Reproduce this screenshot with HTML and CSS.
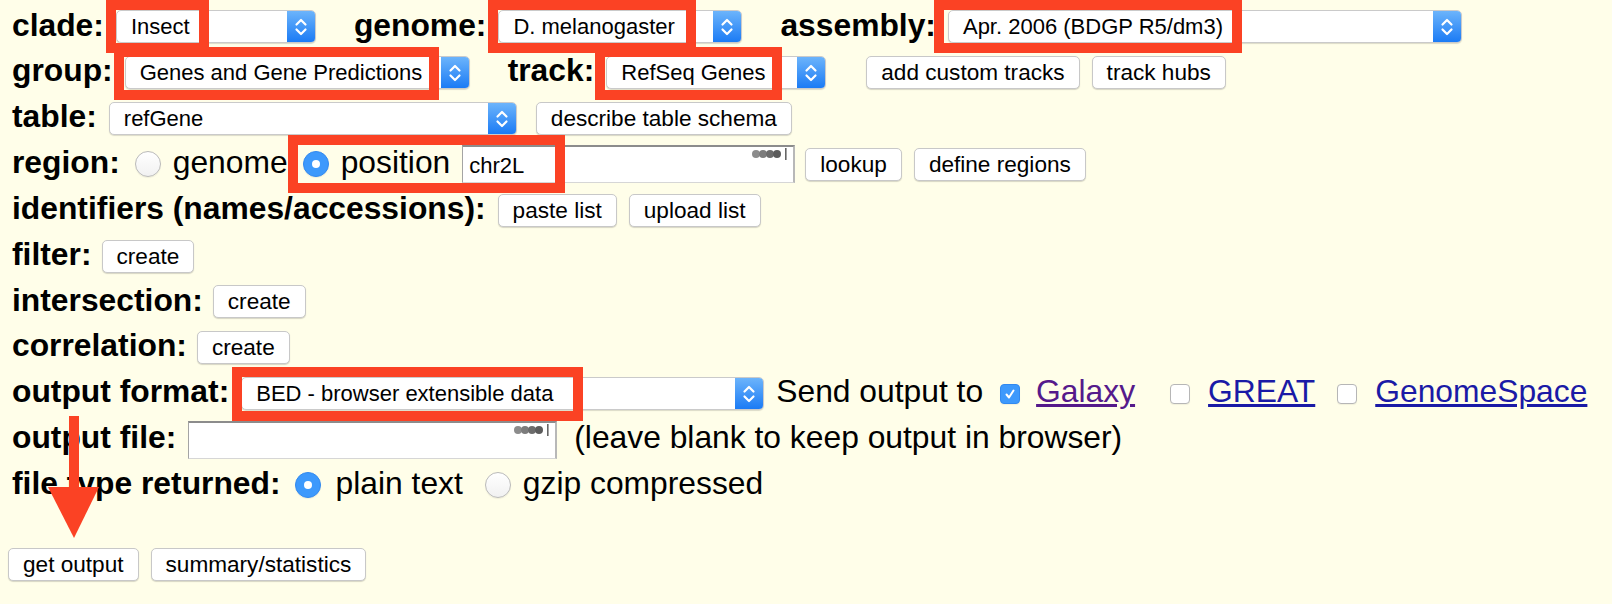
FILE: index.html
```html
<!DOCTYPE html>
<html lang="en">
<head>
<meta charset="utf-8">
<title>Table Browser</title>
<link rel="stylesheet" href="styles.css">
</head>
<body>
<div class="page">
  <form class="form">
    <div class="row">
      <span class="lbl">clade:</span>
      <div class="sel sel-clade"><span class="sel-text">Insect</span><span class="sel-arrow"><svg width="14" height="22" viewBox="0 0 14 22"><path d="M2.5 8.5 L7 4 L11.5 8.5 M2.5 13.5 L7 18 L11.5 13.5" fill="none" stroke="#fff" stroke-width="2.2" stroke-linecap="round" stroke-linejoin="round"/></svg></span></div>
      <span class="lbl wide">genome:</span>
      <div class="sel sel-genome"><span class="sel-text">D. melanogaster</span><span class="sel-arrow"><svg width="14" height="22" viewBox="0 0 14 22"><path d="M2.5 8.5 L7 4 L11.5 8.5 M2.5 13.5 L7 18 L11.5 13.5" fill="none" stroke="#fff" stroke-width="2.2" stroke-linecap="round" stroke-linejoin="round"/></svg></span></div>
      <span class="lbl wide">assembly:</span>
      <div class="sel sel-assembly"><span class="sel-text">Apr. 2006 (BDGP R5/dm3)</span><span class="sel-arrow"><svg width="14" height="22" viewBox="0 0 14 22"><path d="M2.5 8.5 L7 4 L11.5 8.5 M2.5 13.5 L7 18 L11.5 13.5" fill="none" stroke="#fff" stroke-width="2.2" stroke-linecap="round" stroke-linejoin="round"/></svg></span></div>
    </div>

    <div class="row">
      <span class="lbl">group:</span>
      <div class="sel sel-group"><span class="sel-text">Genes and Gene Predictions</span><span class="sel-arrow"><svg width="14" height="22" viewBox="0 0 14 22"><path d="M2.5 8.5 L7 4 L11.5 8.5 M2.5 13.5 L7 18 L11.5 13.5" fill="none" stroke="#fff" stroke-width="2.2" stroke-linecap="round" stroke-linejoin="round"/></svg></span></div>
      <span class="lbl wide">track:</span>
      <div class="sel sel-track"><span class="sel-text">RefSeq Genes</span><span class="sel-arrow"><svg width="14" height="22" viewBox="0 0 14 22"><path d="M2.5 8.5 L7 4 L11.5 8.5 M2.5 13.5 L7 18 L11.5 13.5" fill="none" stroke="#fff" stroke-width="2.2" stroke-linecap="round" stroke-linejoin="round"/></svg></span></div>
      <button type="button" class="btn wider">add custom tracks</button>
      <button type="button" class="btn">track hubs</button>
    </div>

    <div class="row">
      <span class="lbl">table:</span>
      <div class="sel sel-table"><span class="sel-text">refGene</span><span class="sel-arrow"><svg width="14" height="22" viewBox="0 0 14 22"><path d="M2.5 8.5 L7 4 L11.5 8.5 M2.5 13.5 L7 18 L11.5 13.5" fill="none" stroke="#fff" stroke-width="2.2" stroke-linecap="round" stroke-linejoin="round"/></svg></span></div>
      <button type="button" class="btn mid">describe table schema</button>
    </div>

    <div class="row">
      <span class="lbl">region:</span>
      <span class="radio nudge"></span>
      <span class="txt">genome</span>
      <span class="radio on nudge"></span>
      <span class="txt">position</span>
      <div class="field field-pos"><input type="text" value="chr2L"><svg class="dots" width="40" height="12" viewBox="0 0 40 12"><circle cx="5" cy="6" r="4" fill="#8c8c8c"/><circle cx="12" cy="6" r="4" fill="#7c7c7c"/><circle cx="19" cy="6" r="4" fill="#6c6c6c"/><circle cx="26" cy="6" r="4" fill="#5c5c5c"/><rect x="34" y="0" width="1.6" height="12" fill="#666"/></svg></div>
      <button type="button" class="btn tuck">lookup</button>
      <button type="button" class="btn">define regions</button>
    </div>

    <div class="row">
      <span class="lbl">identifiers (names/accessions):</span>
      <button type="button" class="btn">paste list</button>
      <button type="button" class="btn">upload list</button>
    </div>

    <div class="row row-create">
      <span class="lbl">filter:</span>
      <button type="button" class="btn">create</button>
    </div>

    <div class="row row-create">
      <span class="lbl">intersection:</span>
      <button type="button" class="btn">create</button>
    </div>

    <div class="row row-create">
      <span class="lbl">correlation:</span>
      <button type="button" class="btn">create</button>
    </div>

    <div class="row">
      <span class="lbl">output format:</span>
      <div class="sel sel-format"><span class="sel-text">BED - browser extensible data</span><span class="sel-arrow"><svg width="14" height="22" viewBox="0 0 14 22"><path d="M2.5 8.5 L7 4 L11.5 8.5 M2.5 13.5 L7 18 L11.5 13.5" fill="none" stroke="#fff" stroke-width="2.2" stroke-linecap="round" stroke-linejoin="round"/></svg></span></div>
      <span class="txt">Send output to</span>
      <span class="check on"><svg width="18" height="18" viewBox="0 0 18 18"><path d="M5.5 9.5 L8 12.5 L12.5 5.5" fill="none" stroke="#fff" stroke-width="2" stroke-linecap="round" stroke-linejoin="round"/></svg></span>
      <a class="lnk visited" href="#galaxy">Galaxy</a>
      <span class="check far"></span>
      <a class="lnk" href="#great">GREAT</a>
      <span class="check far2"></span>
      <a class="lnk" href="#genomespace">GenomeSpace</a>
    </div>

    <div class="row">
      <span class="lbl">output file:</span>
      <div class="field field-out"><input type="text" value=""><svg class="dots" width="40" height="12" viewBox="0 0 40 12"><circle cx="5" cy="6" r="4" fill="#8c8c8c"/><circle cx="12" cy="6" r="4" fill="#7c7c7c"/><circle cx="19" cy="6" r="4" fill="#6c6c6c"/><circle cx="26" cy="6" r="4" fill="#5c5c5c"/><rect x="34" y="0" width="1.6" height="12" fill="#666"/></svg></div>
      <span class="txt note">(leave blank to keep output in browser)</span>
    </div>

    <div class="row">
      <span class="lbl">file type returned:</span>
      <span class="radio on shift"></span>
      <span class="txt shift-txt">plain text</span>
      <span class="radio far"></span>
      <span class="txt">gzip compressed</span>
    </div>

    <div class="actions">
      <button type="button" class="btn">get output</button>
      <button type="button" class="btn">summary/statistics</button>
    </div>
  </form>

  <div class="mark mark-clade"></div>
  <div class="mark mark-genome"></div>
  <div class="mark mark-assembly"></div>
  <div class="mark mark-group"></div>
  <div class="mark mark-track"></div>
  <div class="mark mark-position"></div>
  <div class="mark mark-format"></div>
  <svg class="arrow" width="52" height="124" viewBox="0 0 52 124"><rect x="21" y="0" width="10" height="76" fill="#fb4224"/><polygon points="0,71 51,71 26,122" fill="#fb4224"/></svg>
</div>
</body>
</html>
```

FILE: styles.css
```css
* { box-sizing: border-box; }

html, body {
  margin: 0;
  padding: 0;
}

body {
  background: #fffee9;
  color: #000;
  font-family: "Liberation Sans", Arial, Helvetica, sans-serif;
}

.page {
  position: relative;
  width: 1612px;
  height: 604px;
  overflow: hidden;
}

.form {
  margin: 0;
  padding: 4px 0 0 12px;
}

.row {
  display: flex;
  align-items: center;
  gap: 12px;
  height: 45.85px;
  white-space: nowrap;
}

.row-create { gap: 10px; }

.lbl {
  font-weight: bold;
  font-size: 31.8px;
  line-height: 1;
  margin-bottom: 3px;
}

.txt {
  font-size: 31.8px;
  line-height: 1;
  margin-bottom: 3px;
}

/* select popups */
.sel {
  display: flex;
  height: 33px;
  background: #fff;
  border: 1px solid #cacaca;
  border-radius: 5px;
  box-shadow: 0 1px 1px rgba(0, 0, 0, 0.14);
  overflow: hidden;
}

.sel-text {
  flex: 1;
  font-size: 22px;
  line-height: 31px;
  padding-left: 14px;
  overflow: hidden;
}

.sel-arrow {
  width: 28px;
  display: flex;
  align-items: center;
  justify-content: center;
  background: linear-gradient(#6cb4fb, #1b7bf5);
}

.sel-clade { width: 200px; }
.sel-genome { width: 244px; }
.sel-assembly { width: 514px; }
.sel-group { width: 345px; }
.sel-track { width: 220px; }
.sel-table { width: 408px; }
.sel-format { width: 523px; }

/* buttons */
.btn {
  height: 33px;
  margin: 0;
  padding: 0 14px;
  font-family: "Liberation Sans", Arial, Helvetica, sans-serif;
  font-size: 22.6px;
  line-height: 31px;
  color: #000;
  background: #fff;
  border: 1px solid #c8c8c8;
  border-radius: 5px;
  box-shadow: 0 1px 1px rgba(0, 0, 0, 0.16);
}

/* text fields */
.field {
  position: relative;
  height: 38px;
}

.field-pos { width: 333px; }
.field-out { width: 369px; }

.field input {
  width: 100%;
  height: 100%;
  margin: 0;
  padding: 3px 6px 0;
  font-family: "Liberation Sans", Arial, Helvetica, sans-serif;
  font-size: 22px;
  color: #000;
  background: #fff;
  border-style: solid;
  border-width: 2px 2px 1px 1px;
  border-color: #8c8c8c #b8b8b8 #d6d6d6 #a4a4a4;
  outline: none;
}

.dots {
  position: absolute;
  top: 3px;
  right: 4px;
}

/* radio buttons */
.radio {
  width: 26px;
  height: 26px;
  flex: none;
  border-radius: 50%;
  border: 1px solid #bababa;
  background: linear-gradient(#ffffff, #f1f1f1);
  box-shadow: 0 1px 1px rgba(0, 0, 0, 0.06);
}

.radio.on {
  display: flex;
  align-items: center;
  justify-content: center;
  background: #3d99fc;
  border-color: #3189f0;
}

.radio.on::after {
  content: "";
  width: 8px;
  height: 8px;
  border-radius: 50%;
  background: #fff;
}

.radio.far { margin-left: 10px; }

/* checkboxes */
.check {
  width: 20px;
  height: 20px;
  flex: none;
  display: flex;
  align-items: center;
  justify-content: center;
  border-radius: 4px;
  border: 1px solid #b6b6b6;
  background: #fff;
  box-shadow: 0 1px 1px rgba(0, 0, 0, 0.06);
  margin-left: 5px;
  margin-right: 4px;
}

.check.on {
  background: #3d99fc;
  border-color: #3189f0;
}

.check.far { margin-left: 23px; margin-right: 6px; }
.check.far2 { margin-left: 10px; margin-right: 6px; }

.lnk {
  font-size: 31.8px;
  line-height: 1;
  margin-bottom: 3px;
  color: #1a1aa6;
  text-decoration: underline;
}

.lnk.visited { color: #551a8b; }

/* bottom actions */
.actions {
  display: flex;
  gap: 12px;
  margin: 40px 0 0 -4px;
}

/* spacing modifiers */
.wide { margin-left: 26px; }
.btn.wider { margin-left: 28px; }
.btn.mid { margin-left: 7px; }
.btn.tuck { margin-left: -2px; }
.nudge { margin-left: 3px; }
.note { margin-left: 5px; }
.radio.shift { margin-left: 2px; }
.shift-txt { margin-left: 3px; }

/* annotation overlays */
.mark {
  position: absolute;
  border: 10px solid #fb4224;
  pointer-events: none;
}

.mark-clade { left: 106px; top: 0; width: 103px; height: 53px; }
.mark-genome { left: 488px; top: 0; width: 208px; height: 53px; }
.mark-assembly { left: 934px; top: 0; width: 308px; height: 53px; }
.mark-group { left: 114px; top: 47px; width: 325px; height: 53px; }
.mark-track { left: 595px; top: 47px; width: 187px; height: 53px; }
.mark-position { left: 288px; top: 135px; width: 277px; height: 58px; }
.mark-format { left: 232px; top: 367px; width: 351px; height: 54px; }

.arrow {
  position: absolute;
  left: 48px;
  top: 416px;
}
```
